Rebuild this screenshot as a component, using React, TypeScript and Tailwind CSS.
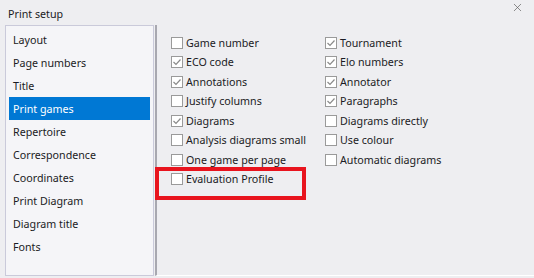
import { X } from 'lucide-react';

const pages = [
  'Layout',
  'Page numbers',
  'Title',
  'Print games',
  'Repertoire',
  'Correspondence',
  'Coordinates',
  'Print Diagram',
  'Diagram title',
  'Fonts',
];

const left = [
  { label: 'Game number', on: false },
  { label: 'ECO code', on: true },
  { label: 'Annotations', on: true },
  { label: 'Justify columns', on: false },
  { label: 'Diagrams', on: true },
  { label: 'Analysis diagrams small', on: false },
  { label: 'One game per page', on: false },
  { label: 'Evaluation Profile', on: false },
];

const right = [
  { label: 'Tournament', on: true },
  { label: 'Elo numbers', on: true },
  { label: 'Annotator', on: true },
  { label: 'Paragraphs', on: true },
  { label: 'Diagrams directly', on: false },
  { label: 'Use colour', on: false },
  { label: 'Automatic diagrams', on: false },
];

function Check({ label, on }: { label: string; on: boolean }) {
  return (
    <div className="flex items-center h-[19.5px]">
      <span className="w-[12px] h-[12px] border border-[#9a9a9a] bg-white flex items-center justify-center shrink-0">
        {on && (
          <svg width="10" height="10" viewBox="0 0 10 10">
            <path d="M1.5 5 L4 7.5 L8.5 2.5" fill="none" stroke="#8a8a8a" strokeWidth="1.2" />
          </svg>
        )}
      </span>
      <span className="ml-[3px]">{label}</span>
    </div>
  );
}

export default function App() {
  return (
    <div
      className="w-[534px] h-[278px] bg-[#eeeef1] text-[10.7px] text-[#1b1b24] flex flex-col relative overflow-hidden"
      style={{ fontFamily: '"Noto Sans", "DejaVu Sans", sans-serif' }}
    >
      <div className="h-[25px] flex items-start justify-between">
        <span className="ml-[8px] mt-[6px] leading-[16px]">Print setup</span>
        <X className="mr-[10px] mt-[1px] text-[#555]" size={13} strokeWidth={1.2} />
      </div>
      <div className="flex flex-1 pb-[2px]">
        <div className="ml-[5px] w-[149px] border border-[#cacada] bg-[#f5f5f8] pt-[2px] px-[3px]">
          {pages.map((p) => (
            <div
              key={p}
              className={
                p === 'Print games'
                  ? 'h-[23px] flex items-center pt-[2px] pl-[4px] bg-[#0078d4] text-white'
                  : 'h-[23px] flex items-center pt-[2px] pl-[4px]'
              }
            >
              {p}
            </div>
          ))}
        </div>
        <div className="ml-[1px] flex-1 border-l-2 border-l-[#a8a8b0] border-b border-b-white pt-[8px] pl-[14px] flex">
          <div className="w-[154px]">
            {left.map((c) => (
              <Check key={c.label} {...c} />
            ))}
          </div>
          <div>
            {right.map((c) => (
              <Check key={c.label} {...c} />
            ))}
          </div>
        </div>
      </div>
      <div className="absolute left-[155px] top-[167px] w-[151px] h-[33px] border-[4px] border-[#e8141e]" />
    </div>
  );
}
